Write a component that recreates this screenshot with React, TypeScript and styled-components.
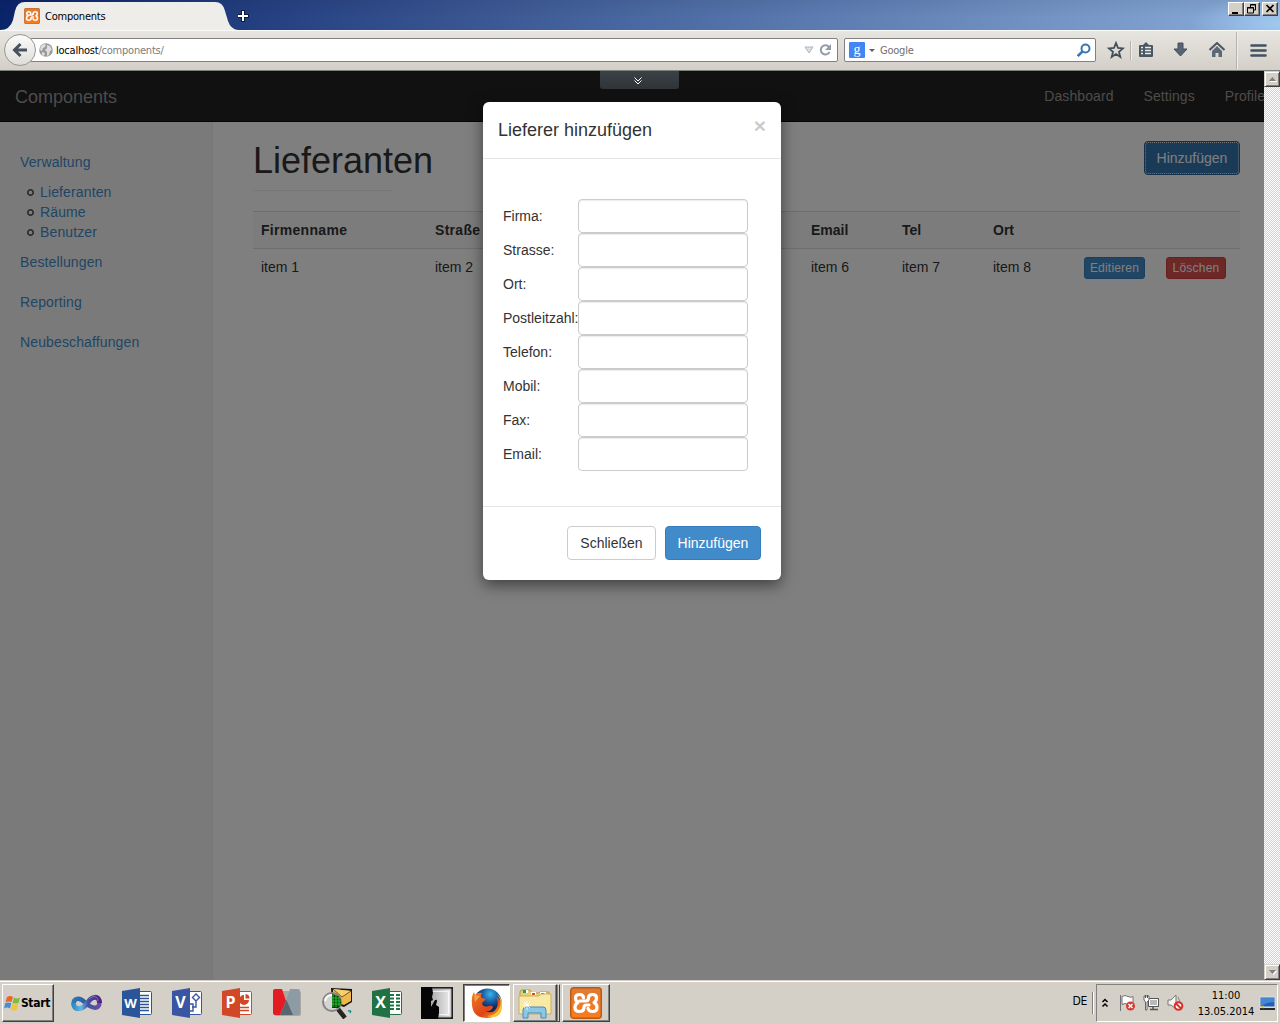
import React from "react";
import styled, { createGlobalStyle, css } from "styled-components";

const uiFont = `"DejaVu Sans Condensed", "DejaVu Sans", sans-serif`;
const pageFont = `"Liberation Sans", Arial, sans-serif`;

const GlobalStyle = createGlobalStyle`
  *, *::before, *::after { box-sizing: border-box; }
  body { margin: 0; background: #d4d0c8; overflow: hidden; }
  svg { display: block; flex: none; }
`;

const Screen = styled.div`
  width: 1280px;
  height: 1024px;
  display: flex;
  flex-direction: column;
  overflow: hidden;
  font-family: ${uiFont};
  font-size: 11px;
  color: #000;
`;

/* ---------- browser chrome ---------- */

const TitleBar = styled.header`
  height: 30px;
  flex: none;
  display: flex;
  align-items: flex-end;
  background:
    radial-gradient(ellipse 90px 30px at 1280px 24px, rgba(166, 208, 245, 0.8), transparent),
    linear-gradient(180deg, rgba(0, 0, 30, 0.07), rgba(0, 0, 0, 0) 60%),
    linear-gradient(90deg, #0a246a 0%, #8aacd8 100%);
`;

const Tab = styled.div`
  position: relative;
  width: 238px;
  height: 30px;
  flex: none;
`;

const TabShape = styled.svg`
  position: absolute;
  left: 0;
  top: 0;
`;

const TabLabel = styled.div`
  position: relative;
  display: flex;
  align-items: center;
  gap: 5px;
  padding: 8px 0 0 24px;
  height: 24px;
  letter-spacing: -0.22px;
`;

const NewTab = styled.div`
  flex: 1;
  height: 30px;
`;

const WindowButtons = styled.div`
  display: flex;
  align-self: flex-start;
  padding: 2px 2px 0 0;
`;

const WindowButton = styled.div<{ $gap?: boolean }>`
  width: 16px;
  height: 14px;
  margin-left: ${(p) => (p.$gap ? 2 : 0)}px;
  background: #d4d0c8;
  border: 1px solid;
  border-color: #fff #404040 #404040 #fff;
  box-shadow: inset -1px -1px 0 #808080;
`;

const Toolbar = styled.div`
  height: 41px;
  flex: none;
  display: flex;
  align-items: center;
  padding: 0 12px 1px 4px;
  border-top: 1px solid #fafaf8;
  border-bottom: 1px solid #7b807d;
  background: linear-gradient(180deg, #e7e5e0, #d4cfc8);
`;

const BackButton = styled.div`
  width: 32px;
  height: 32px;
  flex: none;
  z-index: 1;
  border: 1px solid #979797;
  border-radius: 50%;
  display: flex;
  align-items: center;
  justify-content: center;
  background: linear-gradient(#fbfbfa, #deddd9);
`;

const Field = styled.div<{ $width: number; $joined?: boolean }>`
  width: ${(p) => p.$width}px;
  height: 24px;
  flex: none;
  display: flex;
  align-items: center;
  background: #fff;
  border: 1px solid #808080;
  border-radius: 2px;
  margin-left: ${(p) => (p.$joined ? -6 : 6)}px;
  padding-left: ${(p) => (p.$joined ? 8 : 4)}px;
  letter-spacing: -0.22px;
`;

const UrlText = styled.span`
  flex: 1;
  padding: 1px 0 0 3px;
  white-space: pre;
  color: #7c7c7c;
  b { font-weight: 400; color: #000; }
`;

const SearchText = styled.span`
  flex: 1;
  padding: 1px 0 0 4px;
  color: #707070;
`;

const ToolIcons = styled.div`
  display: flex;
  align-items: center;
  flex: 1;
  height: 40px;
`;

const Separator = styled.div<{ $height: number; $before: number; $after: number }>`
  width: 2px;
  height: ${(p) => p.$height}px;
  margin: 0 ${(p) => p.$after}px 0 ${(p) => p.$before}px;
  background: linear-gradient(90deg, #b3b1ae 50%, #f1efec 50%);
`;

/* ---------- page ---------- */

const Viewport = styled.div`
  height: 909px;
  flex: none;
  display: flex;
`;

const Page = styled.div`
  position: relative;
  width: 1264px;
  height: 909px;
  overflow: hidden;
  display: flex;
  flex-direction: column;
  background: #fff;
  color: #333;
  font: 14px/20px ${pageFont};
`;

const Navbar = styled.nav`
  height: 51px;
  flex: none;
  display: flex;
  justify-content: space-between;
  padding-left: 15px;
  background: #222;
  border-bottom: 1px solid #080808;
  color: #999;
`;

const Brand = styled.span`
  font-size: 18px;
  line-height: 22px;
  padding: 15px 0 0;
`;

const NavLinks = styled.div`
  display: flex;
  gap: 30px;
  padding: 15px 0;
  margin-right: -1px;
  letter-spacing: 0.08px;
`;

const Columns = styled.div`
  flex: 1;
  display: flex;
`;

const Sidebar = styled.aside`
  width: 213px;
  flex: none;
  padding-top: 20px;
  background: #f5f5f5;
  border-right: 1px solid #eee;
`;

const Link = styled.a<{ $top?: boolean }>`
  display: block;
  color: #428bca;
  text-decoration: none;
  letter-spacing: 0.13px;
  ${(p) => p.$top && css`padding: 10px 20px;`}
`;

const SubList = styled.ul`
  margin: 0;
  padding: 0;
`;

const SubItem = styled.li`
  display: flex;
  align-items: center;
  gap: 6px;
  padding-left: 27px;
  &::before {
    content: "";
    width: 7px;
    height: 7px;
    margin-top: 1px;
    border: 1px solid #333;
    box-shadow: inset 0 0 0 0.5px #333;
    border-radius: 50%;
  }
`;

const Main = styled.main`
  flex: 1;
  min-width: 0;
  padding: 19px 24px 0 40px;
`;

const HeadingRow = styled.div`
  display: flex;
  justify-content: space-between;
  align-items: flex-start;
  height: 49px;
`;

const Heading = styled.h1`
  margin: 0;
  font-size: 36px;
  font-weight: 400;
  line-height: 40px;
`;

const Rule = styled.hr`
  width: 140px;
  height: 1px;
  margin: 0 0 20px;
  border: 0;
  background: #eee;
`;

const TableRow = styled.div<{ $head?: boolean }>`
  display: grid;
  grid-template-columns: 174px 376px 91px 91px 91px 82px 74px;
  padding: 8px 0 8px 8px;
  height: 37px;
  border-top: 1px solid #ddd;
  ${(p) => p.$head && css`
    font-weight: 700;
    letter-spacing: 0.3px;
    background: #f9f9f9;
  `}
`;

const HeadCell = styled.span<{ $tight?: boolean }>`
  ${(p) => p.$tight && css`letter-spacing: 0;`}
`;

const Button = styled.button<{
  $kind: "primary" | "default" | "danger";
  $width: number;
  $small?: boolean;
  $focused?: boolean;
}>`
  width: ${(p) => p.$width}px;
  height: ${(p) => (p.$small ? 22 : 34)}px;
  padding: 0;
  text-align: center;
  border: 1px solid;
  border-radius: ${(p) => (p.$small ? 3 : 4)}px;
  font: ${(p) => (p.$small ? "12px/18px" : "14px/20px")} ${pageFont};
  white-space: nowrap;
  justify-self: start;
  ${(p) => p.$kind === "primary" && css`color: #fff; background: #428bca; border-color: #357ebd;`}
  ${(p) => p.$kind === "danger" && css`color: #fff; background: #d9534f; border-color: #d43f3a;`}
  ${(p) => p.$kind === "default" && css`color: #333; background: #fff; border-color: #ccc;`}
  ${(p) => p.$small && css`letter-spacing: 0.2px;`}
  ${(p) => p.$focused && css`
    background: #3276b1;
    border-color: #285e8e;
    outline: 1px dotted #dfe8f0;
    outline-offset: -2px;
  `}
`;

const Backdrop = styled.div`
  position: absolute;
  inset: 0;
  display: flex;
  justify-content: center;
  align-items: flex-start;
  padding-top: 31px;
  background: rgba(0, 0, 0, 0.5);
`;

const PullTab = styled.div`
  position: absolute;
  top: 0;
  left: 600px;
  width: 79px;
  height: 18px;
  border-radius: 0 0 3px 3px;
  background: linear-gradient(#3c4146, #2f3439);
  display: flex;
  justify-content: center;
  padding: 6px 3px 0 0;
`;

const Modal = styled.section`
  width: 298px;
  height: 478px;
  display: flex;
  flex-direction: column;
  background: #fff;
  border-radius: 6px;
  box-shadow: 0 5px 15px rgba(0, 0, 0, 0.5);
`;

const ModalHeader = styled.header`
  display: flex;
  justify-content: space-between;
  height: 57px;
  padding: 15px;
  border-bottom: 1px solid #e5e5e5;
`;

const ModalTitle = styled.h4`
  margin: 0;
  font-size: 18px;
  font-weight: 400;
  line-height: 26px;
`;

const Close = styled.span`
  font-size: 21px;
  font-weight: 700;
  line-height: 18px;
  color: #ccc;
`;

const ModalBody = styled.div`
  flex: 1;
  padding: 40px 20px 0;
`;

const FormRow = styled.label`
  display: grid;
  grid-template-columns: 75px 170px;
  align-items: center;
  height: 34px;
`;

const Input = styled.input`
  width: 170px;
  height: 34px;
  padding: 6px 12px;
  border: 1px solid #ccc;
  border-radius: 4px;
  box-shadow: inset 0 1px 1px rgba(0, 0, 0, 0.075);
  background: #fff;
`;

const ModalFooter = styled.footer`
  display: flex;
  justify-content: flex-end;
  gap: 9px;
  height: 74px;
  padding: 19px 20px 20px;
  border-top: 1px solid #e5e5e5;
`;

const Scrollbar = styled.div`
  width: 16px;
  display: flex;
  flex-direction: column;
  justify-content: space-between;
  background: repeating-conic-gradient(#fff 0 25%, #d4d0c8 0 50%) 0 0 / 2px 2px;
`;

const ScrollButton = styled.div`
  height: 16px;
  display: flex;
  align-items: center;
  justify-content: center;
  background: #d4d0c8;
  border: 1px solid;
  border-color: #d4d0c8 #404040 #404040 #d4d0c8;
  box-shadow: inset 1px 1px 0 #fff, inset -1px -1px 0 #808080;
`;

/* ---------- taskbar ---------- */

const Taskbar = styled.footer`
  height: 44px;
  flex: none;
  display: flex;
  align-items: center;
  padding: 1px 2px 0;
  background: #d4d0c8;
  border-top: 1px solid #d4d0c8;
  box-shadow: inset 0 1px 0 #fff;
`;

const TaskButton = styled.div<{ $width: number; $active?: boolean; $gap?: number }>`
  width: ${(p) => p.$width}px;
  height: 38px;
  margin-left: ${(p) => p.$gap ?? 0}px;
  display: flex;
  align-items: center;
  justify-content: center;
  border: 1px solid;
  border-color: ${(p) => (p.$active ? "#404040 #fff #fff #404040" : "#fff #404040 #404040 #fff")};
  box-shadow: ${(p) => (p.$active ? "inset 1px 1px 0 #808080" : "inset -1px -1px 0 #808080")};
  background: ${(p) => (p.$active ? "#fff" : "#d4d0c8")};
`;

const StartText = styled.b`
  font-size: 12px;
  letter-spacing: -0.3px;
  margin-right: 2px;
`;

const Launchers = styled.div`
  display: flex;
  gap: 18px;
  padding-left: 15px;
`;

const StackEdge = styled.i`
  width: 3px;
  height: 38px;
  border: 1px solid;
  border-color: #fff #404040 #404040 #808080;
`;

const Tray = styled.div`
  width: 182px;
  height: 38px;
  display: flex;
  align-items: center;
  border: 1px solid;
  border-color: #808080 #fff #fff #808080;
  padding-left: 4px;
`;

const Language = styled.span`
  margin-left: auto;
  padding-bottom: 4px;
  font-size: 12px;
  letter-spacing: -0.3px;
`;

const TraySeparator = styled(Separator)`
  background: linear-gradient(90deg, #808080 50%, #fff 50%);
`;

const Clock = styled.div`
  width: 60px;
  margin-left: 12px;
  padding-top: 1px;
  text-align: center;
  line-height: 16px;
  white-space: nowrap;
`;

/* ---------- drawings ---------- */

const XamppIcon = ({ size }: { size: number }) => (
  <svg width={size} height={size} viewBox="0 0 32 32">
    <defs>
      <linearGradient id="xa" x2="0" y2="1">
        <stop stopColor="#df7a35" /><stop offset="1" stopColor="#fb7b1b" />
      </linearGradient>
    </defs>
    <rect x=".7" y=".7" width="30.6" height="30.6" rx="3" fill="url(#xa)" stroke="#b85a12" strokeWidth="1.4" />
    <g fill="none" stroke="#fff" strokeWidth="3.2" strokeLinecap="round" strokeLinejoin="round">
      <path d="M13.500 11q0-3.500-4-3.500T5.500 11q0 3 2.500 4.500-3 1.500-3 5 0 4 4.500 4t4.500-4q0-2.500 2.500-2.500h2.500" />
      <path d="M18.500 11q0-3.500 4-3.500t4 3.500q0 3-2.500 4.500 3 1.500 3 5 0 4-4.500 4-3.500 0-4.500-3" />
      <path d="M9.500 14h6q3 0 3-3" />
    </g>
  </svg>
);

const OfficeIcon = ({ letter, color, kind }: { letter: string; color: string; kind: "lines" | "flow" | "chart" | "grid" }) => (
  <svg width="32" height="32" viewBox="0 0 32 32">
    <rect x="15.500" y="4.500" width="15" height="23" rx="1" fill="#fff" stroke={color} />
    {kind === "lines" && <path d="M18 8.500h10M18 11.500h10M18 14.500h10M18 17.500h10M18 20.500h10M18 23.500h10" stroke={color} strokeWidth="1.300" />}
    {kind === "flow" && <path d="M25 7l3.500 3.500L25 14l-3.500-3.500zM25 14v6h-4M19 17h3v7h-3" fill="none" stroke={color} strokeWidth="1.400" />}
    {kind === "chart" && (
      <>
        <path d="M23 8a5 5 0 1 0 5 5h-5z" fill={color} />
        <path d="M24.500 7a4.500 4.500 0 0 1 4 4.500h-4z" fill={color} />
        <path d="M19 20.500h9M19 23.500h9" stroke={color} strokeWidth="1.500" />
      </>
    )}
    {kind === "grid" && <path d="M19 8h4M25 8h4M19 11.500h4M25 11.500h4M19 15h4M25 15h4M19 18.500h4M25 18.500h4M19 22h4M25 22h4" stroke={color} strokeWidth="2" />}
    <path d="M1 4L19 1v30L1 28z" fill={color} />
    <text x="9.500" y="21" textAnchor="middle" fill="#fff" fontFamily="Open Sans, sans-serif" fontWeight="700" fontSize={letter === "W" ? 13 : 16}>{letter}</text>
  </svg>
);

const VisualStudioIcon = () => (
  <svg width="34" height="32" viewBox="0 0 34 32">
    <defs>
      <linearGradient id="vs1"><stop stopColor="#2b78bb" /><stop offset=".45" stopColor="#2c5d9f" /><stop offset="1" stopColor="#6f4aa5" /></linearGradient>
      <linearGradient id="vs2"><stop stopColor="#2f8cc9" /><stop offset=".3" stopColor="#62b9e6" /><stop offset=".55" stopColor="#46509f" /><stop offset="1" stopColor="#4b2482" /></linearGradient>
    </defs>
    <path d="M4.500 17c0-6 6-7 11-2 6 6 15 9 15 0" fill="none" stroke="url(#vs1)" strokeWidth="4.500" />
    <path d="M4.500 16c0 8 9 7 14 0 4-7 12-8 12 0" fill="none" stroke="url(#vs2)" strokeWidth="5" />
    <path d="M20 12c4-4 9-3 9 2" fill="none" stroke="#9a7ccb" strokeWidth="1" opacity=".8" />
  </svg>
);

const MIcon = () => (
  <svg width="32" height="32" viewBox="0 0 32 32">
    <rect x="3" y="4" width="27" height="25" rx="2" fill="#817b77" opacity=".5" />
    <path d="M4 2h7l4 12-6 14H4a2 2 0 0 1-2-2V4q0-2 2-2" fill="#e51b24" />
    <path d="M19 2h8q2 0 2 2v22q0 2-2 2h-5l-7-14z" fill="#8d9ba4" />
    <path d="M15.500 13L22 28H9z" fill="#59666f" />
  </svg>
);

const MailSearchIcon = () => (
  <svg width="32" height="32" viewBox="0 0 32 32">
    <path d="M10 1L31 2v13l-8 5-12-4z" fill="#15140e" />
    <path d="M12 2l18 2v10l-7 4-11-4z" fill="#eeb94a" />
    <path d="M12 2l9 8 9-6" fill="#f6cf72" stroke="#7f551b" />
    <path d="M17 22l7 9" stroke="#252525" strokeWidth="4.500" />
    <circle cx="11" cy="15" r="9" fill="#d4d5d0" stroke="#858585" strokeWidth="2" />
    <path d="M11 7q9 1 9 8 0 4-3 6h-6z" fill="#073d0d" />
    <path d="M12 8v12M15 8v12M18 10v9M11 11h8M11 14h9M11 17h9" stroke="#23b72a" strokeWidth="1.200" />
    <path d="M4 14q1-6 7-6" fill="none" stroke="#fff" strokeWidth="2" />
    <path d="M27 24q4-1 2 2" fill="none" stroke="#168c96" strokeWidth="1.500" />
  </svg>
);

const SilhouetteIcon = () => (
  <svg width="32" height="32" viewBox="0 0 32 32">
    <defs><linearGradient id="sil"><stop stopColor="#929292" /><stop offset="1" stopColor="#ededed" /></linearGradient></defs>
    <path d="M0 0h32v32H0z" fill="#222" />
    <path d="M2 2h28v28H2z" fill="url(#sil)" stroke="#aaa" />
    <path d="M11 4.500h16.500v23H18" fill="none" stroke="#fff" strokeWidth="1" opacity=".7" />
    <path d="M0 0h11l1 6-1 4 1 3-2 1v6l4-7q2-1 2 1l-1 4 3 2v6l-1 6H0z" fill="#050505" />
  </svg>
);

const FirefoxIcon = () => (
  <svg width="32" height="32" viewBox="0 0 32 32">
    <defs>
      <radialGradient id="ffb" cx=".6" cy=".2"><stop stopColor="#39b6e3" /><stop offset=".6" stopColor="#1658a0" /><stop offset="1" stopColor="#10285a" /></radialGradient>
      <linearGradient id="ffo" x2="1" y2="1"><stop stopColor="#ee7c20" /><stop offset=".6" stopColor="#df4518" /><stop offset="1" stopColor="#f6a51e" /></linearGradient>
    </defs>
    <circle cx="16.500" cy="15.500" r="14" fill="url(#ffb)" />
    <path d="M3 5l1 3q3-3 7-2-2 3 0 5l4 1-4 4q1 5 7 3 3-1 4 1-2 5-8 4 9 4 12-4 2-5-1-10 6 3 5 9-2 12-14 12Q2 31 1 18 0 10 3 5z" fill="url(#ffo)" />
    <path d="M26 7q6 8 2 15-4 7-12 7 16 5 15-13-1-6-5-9z" fill="#f9c537" />
    <path d="M3 8l6 1-5 6z" fill="#f4a343" />
  </svg>
);

const FolderIcon = () => (
  <svg width="34" height="32" viewBox="0 0 34 32">
    <path d="M2 5q0-2 2-2h8l2 3h7l1-1h9v21H2z" fill="#e7ce76" stroke="#b59b48" />
    <path d="M5 3h5v3H5zM13 5h5v3h-5zM22 5h6v3h-6z" fill="#fff" />
    <path d="M5 3h3v3H5z" fill="#26a432" /><path d="M14 6h3v2h-3z" fill="#da4b28" /><path d="M23 6h3v2h-3z" fill="#218bd0" />
    <path d="M1 9h20l2-2h10v20H1z" fill="#f8e9a7" stroke="#c8af61" />
    <path d="M5 31v-8q0-3 3-3h17q3 0 3 3v8h-5v-5H10v5z" fill="#8bc8e7" stroke="#4989b2" />
    <path d="M9 14v9M5 18h8M6 15l6 6M12 15l-6 6" stroke="#fff" strokeWidth=".8" />
  </svg>
);

const WindowsFlag = () => (
  <svg width="17" height="17" viewBox="0 0 17 17">
    <path d="M3 2q3-2 6 0L7.500 7q-3-1-6 0z" fill="#ec642b" />
    <path d="M10 2.500q3 2 6 0L14.500 8q-3 1-6 0z" fill="#7ebd3c" />
    <path d="M1.300 8q3-1 6 .2L6 13.500q-3-2-6 0z" fill="#458ed5" />
    <path d="M8.200 9q3 1.500 6 0L13 14.500q-3 2-6 0z" fill="#f4c432" />
  </svg>
);

const Arrow = ({ down }: { down?: boolean }) => (
  <svg width="9" height="6" viewBox="0 0 9 6">
    <path d={down ? "M2 2h7L5.500 6z" : "M2 6h7L5.500 2z"} fill="#fff" />
    <path d={down ? "M1 1h7L4.500 5z" : "M1 5h7L4.500 1z"} fill="#808080" />
  </svg>
);

const Chevrons = ({ up, color }: { up?: boolean; color: string }) => (
  <svg width="8" height="10" viewBox="0 0 8 10">
    <path d={up ? "M1.500 4L4 1.500 6.500 4M1.500 8.500L4 6l2.500 2.500" : "M.5.5L4 4 7.500.5M.5 3.500L4 7l3.500-3.500"} fill="none" stroke={color} strokeWidth={up ? 1.5 : 1} />
  </svg>
);

const navItems = ["Dashboard", "Settings", "Profile"];
const subItems = ["Lieferanten", "Räume", "Benutzer"];
const fields = ["Firma:", "Strasse:", "Ort:", "Postleitzahl:", "Telefon:", "Mobil:", "Fax:", "Email:"];

const BrowserToolbar = () => (
  <Toolbar>
    <BackButton>
      <svg width="16" height="16" viewBox="0 0 16 16"><path d="M8.500 2L2.500 8l6 6M3 8h12" fill="none" stroke="#47525e" strokeWidth="3" /></svg>
    </BackButton>
    <Field $width={808} $joined>
      <svg width="14" height="14" viewBox="0 0 14 14">
        <circle cx="7" cy="7" r="6.800" fill="#999" />
        <path d="M2 3l3-2 2 1-1 2-2 1-1 3-2-1zM8 2l3 1 2 4-2 1-1 4-2 1V9L6 7l2-2zM3 9l3 1-1 3-2-1z" fill="#dedede" />
      </svg>
      <UrlText><b>localhost</b>/components/</UrlText>
      <svg width="10" height="8" viewBox="0 0 10 8"><path d="M1 1h8L5 7z" fill="#dde1e6" stroke="#aeb5be" /></svg>
      <svg width="23" height="14" viewBox="1 0 23 14">
        <path d="M16 4A4.600 4.600 0 1 0 16.500 9" fill="none" stroke="#929da9" strokeWidth="2" />
        <path d="M18 1v6h-6z" fill="#929da9" />
      </svg>
    </Field>
    <Field $width={252}>
      <svg width="16" height="16" viewBox="0 0 16 16">
        <rect width="16" height="16" rx="1" fill="#4285f4" />
        <text x="8" y="11.500" textAnchor="middle" fontFamily="Liberation Serif, serif" fontSize="14" fill="#fff">g</text>
      </svg>
      <svg width="11" height="5" viewBox="0 0 11 5"><path d="M4 1h6L7 4z" fill="#606060" /></svg>
      <SearchText>Google</SearchText>
      <svg width="18" height="15" viewBox="0 0 18 15">
        <circle cx="8.500" cy="5.500" r="4" fill="none" stroke="#3978b2" strokeWidth="2" />
        <path d="M5.500 8.500L.8 13" stroke="#3978b2" strokeWidth="2.500" />
      </svg>
    </Field>
    <ToolIcons>
      <svg width="29" height="18" viewBox="-12 0 29 18"><path d="M8 2l2 5 5 .4-4 3.500 1.300 5L8 13l-4.300 2.900L5 10.900 1 7.400 6 7z" fill="none" stroke="#424f5a" strokeWidth="1.800" /></svg>
      <Separator $height={19} $before={5} $after={6} />
      <svg width="16" height="16" viewBox="0 0 16 16">
        <path d="M2 3h3l3-3 3 3h3q1 0 1 1v10q0 1-1 1H2q-1 0-1-1V4q0-1 1-1z" fill="#485663" />
        <path d="M3 5.500h2M7 5.500h6M3 8.500h2M7 8.500h6M3 11.500h2M7 11.500h6" stroke="#eceae6" strokeWidth="1.600" />
      </svg>
      <svg width="35" height="16" viewBox="-19 0 35 16"><path d="M5 1h5v6h4l-6.500 7L1 7h4z" fill="#566473" stroke="#444f5a" /></svg>
      <svg width="36" height="16" viewBox="-20 0 36 16">
        <path d="M.5 8L8 1l7.500 7" fill="none" stroke="#4a5662" strokeWidth="2" />
        <path d="M3 9l5-5 5 5v6H9.500v-4h-3v4H3z" fill="#5b6876" />
      </svg>
      <Separator $height={37} $before={11} $after={12} />
      <svg width="17" height="13" viewBox="0 0 17 13"><path d="M1.500 1.500h14M1.500 6.500h14M1.500 11.500h14" stroke="#435260" strokeWidth="2.600" strokeLinecap="round" /></svg>
    </ToolIcons>
  </Toolbar>
);

export default function App() {
  return (
    <Screen>
      <GlobalStyle />
      <TitleBar>
        <Tab>
          <TabShape width="238" height="30" viewBox="0 0 238 30">
            <path d="M0 30q10 0 13-10l2-9q2-9 10-9h190q8 0 10 9l3 10q3 9 11 9z" fill="#eeedea" />
          </TabShape>
          <TabLabel><XamppIcon size={16} />Components</TabLabel>
        </Tab>
        <NewTab>
          <svg width="12" height="24" viewBox="0 0 12 24"><path d="M5 10v12M-1 16h12" stroke="#0a1a40" strokeWidth="4" /><path d="M5 11v10M0 16h10" stroke="#fff" strokeWidth="2" /></svg>
        </NewTab>
        <WindowButtons>
          <WindowButton><svg width="14" height="12"><path d="M3 9h6v2H3z" /></svg></WindowButton>
          <WindowButton><svg width="14" height="12"><path d="M5.500 5V1.500h5V7H9M5 2h6" fill="none" stroke="#000" /><path d="M2.500 4.500h6V10h-6zM2 5h7" fill="none" stroke="#000" /></svg></WindowButton>
          <WindowButton $gap><svg width="14" height="12"><path d="M3.500 2l7 7M10.500 2l-7 7" stroke="#000" strokeWidth="1.700" /></svg></WindowButton>
        </WindowButtons>
      </TitleBar>
      <BrowserToolbar />

      <Viewport>
        <Page>
          <Navbar>
            <Brand>Components</Brand>
            <NavLinks>{navItems.map((n) => <span key={n}>{n}</span>)}</NavLinks>
          </Navbar>
          <Columns>
            <Sidebar>
              <Link $top>Verwaltung</Link>
              <SubList>{subItems.map((s) => <SubItem key={s}><Link>{s}</Link></SubItem>)}</SubList>
              <Link $top>Bestellungen</Link>
              <Link $top>Reporting</Link>
              <Link $top>Neubeschaffungen</Link>
            </Sidebar>
            <Main>
              <HeadingRow>
                <Heading>Lieferanten</Heading>
                <Button $kind="primary" $width={96} $focused>Hinzufügen</Button>
              </HeadingRow>
              <Rule />
              <TableRow $head>
                <HeadCell>Firmenname</HeadCell>
                <HeadCell>Straße</HeadCell>
                <HeadCell $tight>Email</HeadCell>
                <HeadCell $tight>Tel</HeadCell>
                <HeadCell $tight>Ort</HeadCell>
              </TableRow>
              <TableRow>
                <span>item 1</span><span>item 2</span><span>item 6</span><span>item 7</span><span>item 8</span>
                <Button $kind="primary" $width={61} $small>Editieren</Button>
                <Button $kind="danger" $width={60} $small>Löschen</Button>
              </TableRow>
            </Main>
          </Columns>
          <Backdrop>
            <Modal>
              <ModalHeader><ModalTitle>Lieferer hinzufügen</ModalTitle><Close>×</Close></ModalHeader>
              <ModalBody>
                {fields.map((f) => <FormRow key={f}>{f}<Input /></FormRow>)}
              </ModalBody>
              <ModalFooter>
                <Button $kind="default" $width={89}>Schließen</Button>
                <Button $kind="primary" $width={96}>Hinzufügen</Button>
              </ModalFooter>
            </Modal>
          </Backdrop>
          <PullTab><Chevrons color="#fff" /></PullTab>
        </Page>
        <Scrollbar>
          <ScrollButton><Arrow /></ScrollButton>
          <ScrollButton><Arrow down /></ScrollButton>
        </Scrollbar>
      </Viewport>

      <Taskbar>
        <TaskButton $width={52}><WindowsFlag /><StartText>Start</StartText></TaskButton>
        <Launchers>
          <VisualStudioIcon />
          <OfficeIcon letter="W" color="#2a5699" kind="lines" />
          <OfficeIcon letter="V" color="#3955a3" kind="flow" />
          <OfficeIcon letter="P" color="#d24726" kind="chart" />
          <MIcon />
          <MailSearchIcon />
          <OfficeIcon letter="X" color="#207245" kind="grid" />
          <SilhouetteIcon />
        </Launchers>
        <TaskButton $width={47} $active $gap={10}><FirefoxIcon /></TaskButton>
        <TaskButton $width={44} $gap={3}><FolderIcon /></TaskButton>
        <StackEdge />
        <TaskButton $width={48} $gap={2}><XamppIcon size={32} /></TaskButton>
        <Language>DE</Language>
        <TraySeparator $height={22} $before={5} $after={2} />
        <Tray>
          <Chevrons up color="#000" />
          <svg width="27" height="18" viewBox="-10 0 27 18">
            <path d="M1.500 1v16M3 2.500q3-2 6 0 3 1.500 5 0v8q-3 1-5 0-3-2-6 0z" fill="#fff" stroke="#727272" />
            <circle cx="11.500" cy="12" r="4.500" fill="#d63a34" /><path d="M9.500 10l4 4M13.500 10l-4 4" stroke="#fff" strokeWidth="1.500" />
          </svg>
          <svg width="24" height="18" viewBox="-7 0 24 18">
            <path d="M5.500 4.500h10v8h-10z" fill="#b9b9b9" stroke="#555" /><path d="M6.500 5.500h8v6h-8z" fill="none" stroke="#fff" /><path d="M7 15.500h8M10 13v2" stroke="#555" strokeWidth="1.500" />
            <path d="M1 2h5v4l-2 2v8H2.500V8L1 6z" fill="#fff" stroke="#666" /><path d="M2.500 1v3M4.500 1v3" stroke="#555" />
          </svg>
          <svg width="24" height="18" viewBox="-7 0 24 18">
            <path d="M1 6h3l5-5v14l-5-4H1z" fill="#f4f4f4" stroke="#777" /><path d="M11 3q3 4 1 8" fill="none" stroke="#888" />
            <circle cx="11.500" cy="12" r="3.800" fill="#fff" stroke="#d8302b" strokeWidth="2" /><path d="M9 9.500l5 5" stroke="#d8302b" strokeWidth="2" />
          </svg>
          <Clock>11:00<br />13.05.2014</Clock>
          <svg width="20" height="16" viewBox="-4 0 20 16">
            <path d="M0 2h15v10H0z" fill="#245fb5" stroke="#d8e4ee" /><path d="M1 3h13v4q-6 0-13 4z" fill="#4787d0" /><path d="M0 13h15v2H0z" fill="#272b30" /><circle cx="3" cy="12" r="1.200" fill="#e8c431" />
          </svg>
        </Tray>
      </Taskbar>
    </Screen>
  );
}
